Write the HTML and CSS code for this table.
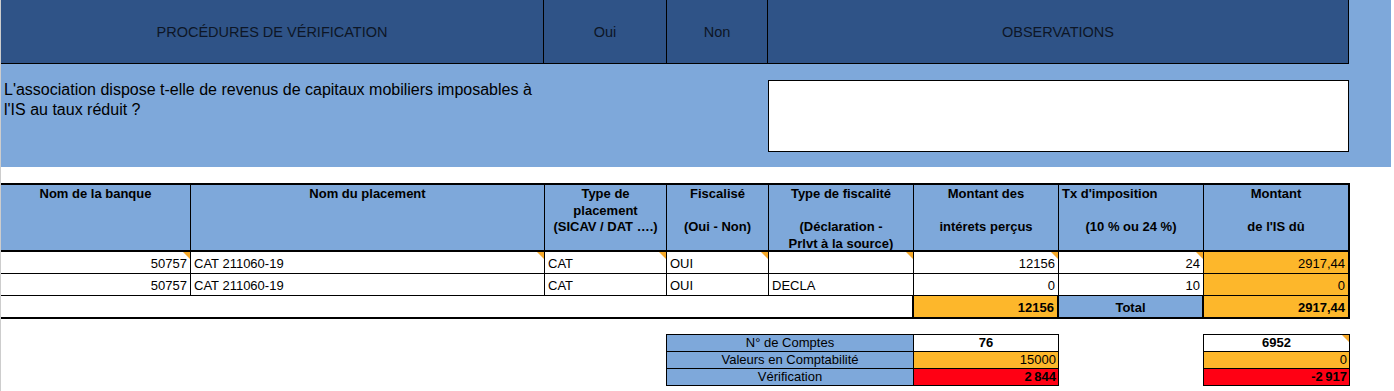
FILE: index.html
```html
<!DOCTYPE html>
<html lang="fr">
<head>
<meta charset="utf-8">
<title>Procédures de vérification</title>
<link rel="stylesheet" href="styles.css">
</head>
<body>
<div class="page">
  <section class="verif">
    <div class="verif-head">
      <div class="vh-cell vh-proc">PROCÉDURES DE VÉRIFICATION</div>
      <div class="vh-cell vh-oui">Oui</div>
      <div class="vh-cell vh-non">Non</div>
      <div class="vh-cell vh-obs">OBSERVATIONS</div>
    </div>
    <div class="verif-body">
      <div class="question-col">
        <p class="question">L'association dispose t-elle de revenus de capitaux mobiliers imposables à l'IS au taux réduit ?</p>
      </div>
      <div class="obs-box"></div>
    </div>
  </section>

  <section class="placements">
    <div class="th">Nom de la banque</div>
    <div class="th">Nom du placement</div>
    <div class="th">Type de<br>placement<br>(SICAV / DAT ….)</div>
    <div class="th">Fiscalisé<br><br>(Oui - Non)</div>
    <div class="th">Type de fiscalité<br><br>(Déclaration -<br>Prlvt à la source)</div>
    <div class="th">Montant des<br><br>intérets perçus</div>
    <div class="th"><span class="th-left">Tx d'imposition</span><br>(10 % ou 24 %)</div>
    <div class="th th-last">Montant<br><br>de l'IS dû</div>

    <div class="td num note">50757</div>
    <div class="td note">CAT 211060-19</div>
    <div class="td note">CAT</div>
    <div class="td note">OUI</div>
    <div class="td note"></div>
    <div class="td num note">12156</div>
    <div class="td num note">24</div>
    <div class="td num orange td-last">2917,44</div>

    <div class="td num">50757</div>
    <div class="td">CAT 211060-19</div>
    <div class="td">CAT</div>
    <div class="td">OUI</div>
    <div class="td">DECLA</div>
    <div class="td num">0</div>
    <div class="td num">10</div>
    <div class="td num orange td-last">0</div>

    <div class="tt tt-blank"></div>
    <div class="tt num orange bold">12156</div>
    <div class="tt center blue bold">Total</div>
    <div class="tt num orange bold td-last">2917,44</div>
  </section>

  <section class="summary">
    <div class="sum-box sum-main">
      <div class="sl">N° de Comptes</div>
      <div class="sv center bold">76</div>
      <div class="sl">Valeurs en Comptabilité</div>
      <div class="sv num orange">15000</div>
      <div class="sl sl-last">Vérification</div>
      <div class="sv sv-last num red bold">2&#8201;844</div>
    </div>
    <div class="sum-box sum-side">
      <div class="sv center bold note">6952</div>
      <div class="sv num orange">0</div>
      <div class="sv sv-last num red bold">-2&#8201;917</div>
    </div>
  </section>
</div>
</body>
</html>
```

FILE: styles.css
```css
* { box-sizing: border-box; }

body {
  margin: 0;
  background: #ffffff;
  font-family: "Liberation Sans", Arial, sans-serif;
  color: #000;
}

.page {
  width: 1394px;
  height: 391px;
  border-left: 1px solid #cdcdcd;
  overflow: hidden;
}

/* ---------- top verification block ---------- */
.verif {
  width: 1390px;
  background: #7ea8da;
}

.verif-head {
  display: flex;
  width: 1348px;
  height: 64px;
  background: #2f5387;
  border-bottom: 1px solid #000;
  border-right: 1px solid #000;
}

.vh-cell {
  display: flex;
  align-items: center;
  justify-content: center;
  font-size: 14.5px;
  color: #0d1626;
  border-right: 1px solid #000;
}

.vh-proc { width: 543px; }
.vh-oui { width: 123px; }
.vh-non { width: 101px; }
.vh-obs { flex: 1; border-right: none; }

.verif-body {
  display: flex;
  height: 103px;
}

.question-col {
  width: 767px;
  padding: 16px 0 0 3px;
}

.question {
  margin: 0;
  width: 545px;
  font-size: 16px;
  line-height: 19.5px;
  color: #000;
}

.obs-box {
  width: 581px;
  height: 72px;
  margin-top: 16px;
  background: #fff;
  border: 1px solid #000;
}

/* ---------- placements table ---------- */
.placements {
  display: grid;
  grid-template-columns: 190px 354px 122px 102px 145px 145px 145px 146px;
  grid-template-rows: 67px 22px 22px 23px;
  width: 1349px;
  margin-top: 16px;
  border-top: 2px solid #000;
  font-size: 13px;
}

.th {
  background: #7ea8da;
  font-weight: bold;
  text-align: center;
  line-height: 16.5px;
  padding-top: 1px;
  border-right: 1px solid #000;
  border-bottom: 2px solid #000;
}

.th-left {
  display: block;
  text-align: left;
  padding-left: 3px;
}

.th-last { border-right: 2px solid #000; }

.td {
  position: relative;
  background: #fff;
  line-height: 20px;
  padding: 2px 3px 0 3px;
  border-right: 1px solid #000;
  border-bottom: 1px solid #000;
  white-space: nowrap;
}

.td-last { border-right: 2px solid #000; }

.tt {
  line-height: 20px;
  padding: 2px 3px 0 3px;
  border-right: 2px solid #000;
  border-bottom: 2px solid #000;
  font-size: 13px;
}

.tt-blank {
  grid-column: span 5;
  background: #fff;
  border-right: 2px solid #000;
}

.num { text-align: right; }
.center { text-align: center; }
.bold { font-weight: bold; }
.orange { background: #fdb72b; }
.red { background: #ff0014; }
.blue { background: #7ea8da; }

.note::after {
  content: "";
  position: absolute;
  top: 0;
  right: 0;
  width: 0;
  height: 0;
  border-top: 7px solid #f6a92a;
  border-left: 7px solid transparent;
}

/* ---------- summary boxes ---------- */
.summary {
  display: flex;
  margin-top: 15px;
  padding-left: 665px;
  font-size: 13px;
}

.sum-box {
  display: grid;
  border: 1px solid #000;
}

.sum-main {
  width: 393px;
  grid-template-columns: 247px 1fr;
}

.sum-side {
  width: 147px;
  margin-left: 144px;
  grid-template-columns: 1fr;
}

.sl {
  background: #7ea8da;
  text-align: center;
  height: 17px;
  line-height: 16px;
  border-right: 1px solid #000;
  border-bottom: 1px solid #000;
}

.sv {
  position: relative;
  background: #fff;
  height: 17px;
  line-height: 16px;
  padding: 0 2px;
  border-bottom: 1px solid #000;
}

.sv.orange { background: #fdb72b; }
.sv.red { background: #ff0014; }

.sl-last, .sv-last {
  height: 16px;
  border-bottom: none;
}
```
